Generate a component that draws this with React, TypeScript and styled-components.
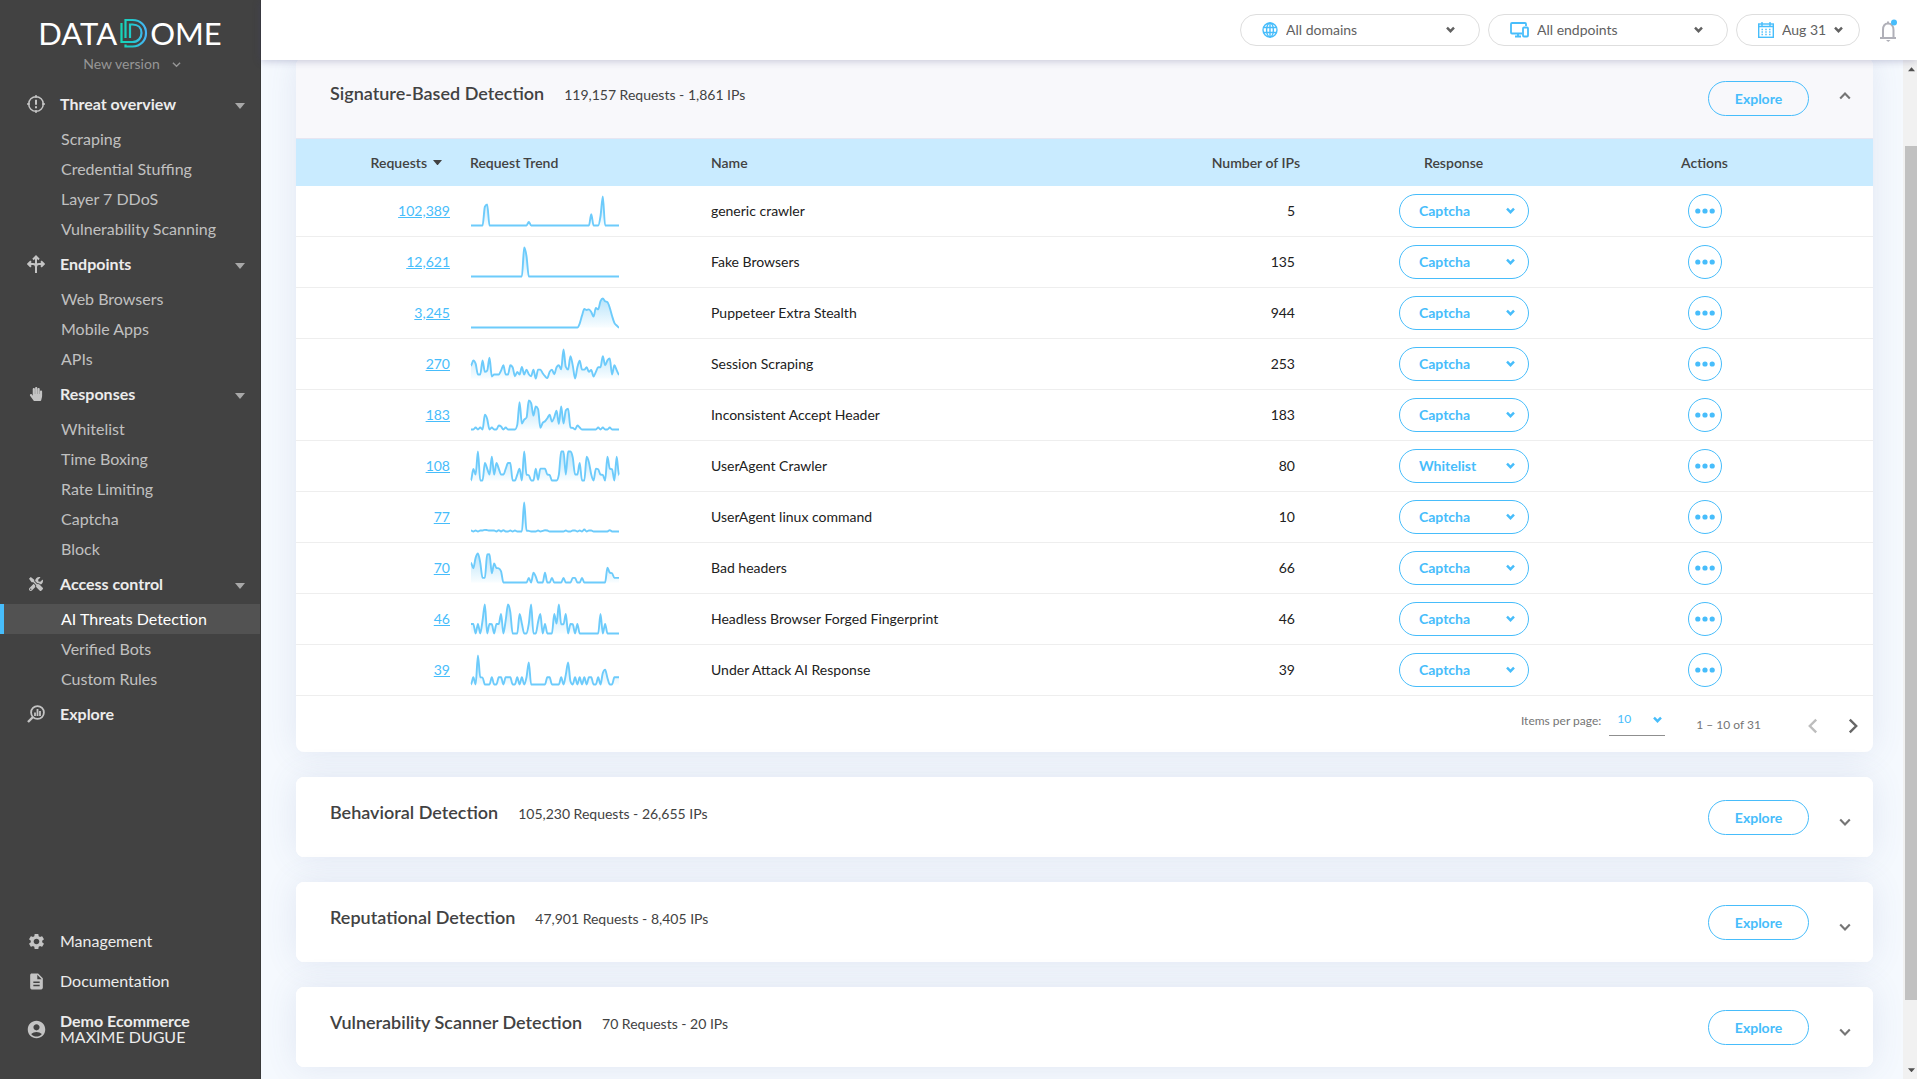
import React from "react";
import styled, { createGlobalStyle } from "styled-components";
import { FaHandPaper, FaTools } from "react-icons/fa";
import { MdAccountCircle, MdDescription, MdSettings } from "react-icons/md";

const GlobalStyle = createGlobalStyle`
  *, *::before, *::after { box-sizing: border-box; }
  body {
    margin: 0;
    font-family: Lato, "Open Sans", sans-serif;
    font-size: 14px;
    color: #424242;
    background: #f5f9fe;
  }
  button, select { font: inherit; color: inherit; }
  button { cursor: pointer; }
  a { color: inherit; text-decoration: none; }
  svg { display: block; flex: none; }
  ul { list-style: none; margin: 0; padding: 0; }
`;

const BLUE = "#47bdfb";

const Shell = styled.div`
  display: flex;
  height: 100vh;
  overflow: hidden;
`;

/* ---------- sidebar ---------- */

const Sidebar = styled.aside`
  flex: none;
  width: 261px;
  display: flex;
  flex-direction: column;
  padding-bottom: 22px;
  background: #424242;
  border-right: 1px solid #3a3a3a;
  color: #ececec;
`;

const Brand = styled.div`
  display: flex;
  flex-direction: column;
  align-items: center;
  height: 84px;
  padding-top: 16px;
`;

const Logo = styled.div`
  display: flex;
  align-items: center;
  gap: 2px;
  height: 34px;
  font-size: 31px;
  line-height: 34px;
  color: #fff;
`;

const VersionButton = styled.button`
  display: flex;
  align-items: center;
  gap: 12px;
  border: 0;
  padding: 0 0 0 4px;
  background: none;
  color: #969696;
  line-height: 28px;
`;

const Nav = styled.nav`
  flex: 1;
`;

const GroupHead = styled.a`
  display: grid;
  grid-template-columns: 60px 1fr 10px;
  align-items: center;
  height: 40px;
  padding: 0 15px 1px 0;
  font-size: 16px;
  font-weight: 700;
`;

const IconSlot = styled.span`
  display: flex;
  justify-content: center;
  padding-left: 12px;
  color: #c4c4c4;
`;

const CaretSlot = styled.span`
  padding-top: 4px;
  color: #a8a8a8;
`;

const NavLink = styled.a<{ $active?: boolean }>`
  display: block;
  height: 30px;
  padding-left: ${(p) => (p.$active ? 57 : 61)}px;
  border-left: ${(p) => (p.$active ? `4px solid ${BLUE}` : "0")};
  background: ${(p) => (p.$active ? "#525252" : "none")};
  color: ${(p) => (p.$active ? "#fff" : "#c0c0c0")};
  font-size: 16px;
  line-height: 30px;
`;

const FootLink = styled.a<{ $tall?: boolean }>`
  display: grid;
  grid-template-columns: 60px 1fr;
  align-items: center;
  height: ${(p) => (p.$tall ? 56 : 40)}px;
  font-size: 16px;
  line-height: 16px;

  strong { display: block; }
`;

/* ---------- top bar ---------- */

const Main = styled.div`
  flex: 1;
  min-width: 0;
  display: flex;
  flex-direction: column;
`;

const TopBar = styled.header`
  position: relative;
  z-index: 2;
  flex: none;
  display: flex;
  justify-content: flex-end;
  align-items: center;
  gap: 8px;
  height: 60px;
  padding-right: 20px;
  background: #fff;
  box-shadow: 0 1px 8px rgba(60, 60, 120, 0.28);
`;

const Pill = styled.label<{ $width: number; $end?: number }>`
  display: flex;
  align-items: center;
  gap: 8px;
  width: ${(p) => p.$width}px;
  height: 32px;
  padding: 0 ${(p) => p.$end ?? 24}px 0 21px;
  border: 1px solid #dedede;
  border-radius: 16px;
  color: #616161;
`;

const PlainSelect = styled.select`
  flex: 1;
  min-width: 0;
  appearance: none;
  border: 0;
  padding: 0 0 2px;
  outline: 0;
  background: none;
`;

const BellButton = styled.button`
  display: flex;
  margin-left: 12px;
  border: 0;
  padding: 0;
  background: none;
`;

/* ---------- content ---------- */

const Body = styled.div`
  flex: 1;
  min-height: 0;
  display: flex;
`;

const Content = styled.main`
  flex: 1;
  min-width: 0;
  display: flex;
  flex-direction: column;
  gap: 25px;
  margin-top: -2px;
  padding: 0 30px 0 35px;
`;

const Card = styled.section`
  flex: none;
  border-radius: 8px;
  background: #fff;
  box-shadow: 0 0 32px rgba(80, 100, 155, 0.12);
`;

const CardHead = styled.div<{ $open?: boolean }>`
  display: flex;
  align-items: flex-start;
  height: ${(p) => (p.$open ? 81 : 80)}px;
  padding: 23px 22px 0 34px;
  border-radius: ${(p) => (p.$open ? "8px 8px 0 0" : "8px")};
  border-bottom: ${(p) => (p.$open ? "1px solid #e6e6f2" : "0")};
  background: ${(p) => (p.$open ? "#f8f8fb" : "#fff")};
`;

const CardTitle = styled.h2`
  margin: 0 20px 0 0;
  font-size: 18px;
  font-weight: 600;
  line-height: 24px;
`;

const CardMeta = styled.span`
  flex: 1;
  line-height: 28px;
`;

const ExploreButton = styled.button`
  width: 101px;
  height: 35px;
  margin-right: 30px;
  border: 1px solid ${BLUE};
  border-radius: 18px;
  padding: 0;
  background: none;
  color: ${BLUE};
  font-weight: 700;
`;

const ToggleButton = styled.button<{ $open?: boolean }>`
  display: flex;
  border: 0;
  padding: ${(p) => (p.$open ? 9 : 16)}px 0 0;
  background: none;
  color: #757575;
`;

const Table = styled.table`
  width: 100%;
  table-layout: fixed;
  border-collapse: separate;
  border-spacing: 0;
`;

const Col = styled.col<{ $width: number }>`
  width: ${(p) => p.$width}px;
`;

const Th = styled.th<{ $align?: string; $pad?: string }>`
  height: 47px;
  padding: ${(p) => p.$pad ?? "0"};
  background: #c9ebff;
  font-weight: 600;
  text-align: ${(p) => p.$align ?? "left"};
`;

const SortButton = styled.button`
  display: inline-flex;
  align-items: center;
  gap: 6px;
  border: 0;
  padding: 0;
  background: none;
  font-weight: 600;
`;

const Td = styled.td<{ $align?: string; $pad?: string }>`
  height: 51px;
  padding: ${(p) => p.$pad ?? "0"};
  border-bottom: 1px solid #eeeeee;
  color: #212121;
  text-align: ${(p) => p.$align ?? "left"};
`;

const CountLink = styled.a`
  color: ${BLUE};
  text-decoration: underline;
`;

const ResponseBox = styled.label`
  display: flex;
  align-items: center;
  width: 130px;
  height: 34px;
  padding: 0 13px 0 19px;
  border: 1px solid ${BLUE};
  border-radius: 17px;
  color: ${BLUE};
  font-weight: 700;
`;

const MoreButton = styled.button`
  display: inline-flex;
  align-items: center;
  justify-content: center;
  width: 34px;
  height: 34px;
  border: 1px solid ${BLUE};
  border-radius: 50%;
  padding: 0;
  background: none;
  color: ${BLUE};
  vertical-align: middle;
`;

const Pager = styled.div`
  display: flex;
  align-items: center;
  justify-content: flex-end;
  height: 56px;
  color: #757575;
  font-size: 12px;
`;

const PageSize = styled.label`
  display: flex;
  align-items: center;
  gap: 8px;
  margin: 0 31px 8px 0;
`;

const PageSizeBox = styled.span`
  display: flex;
  align-items: center;
  width: 56px;
  height: 32px;
  padding: 0 3px 0 8px;
  border-bottom: 1px solid #8f8f8f;
  color: ${BLUE};
`;

const PageRange = styled.span`
  margin-right: 32px;
`;

const PageButton = styled.button`
  display: flex;
  align-items: center;
  justify-content: center;
  width: 40px;
  height: 40px;
  padding: 4px 0 0;
  border: 0;
  background: none;
  color: #666;

  &:disabled { color: #bdbdbd; }
`;

const ScrollTrack = styled.div`
  flex: none;
  width: 14px;
  display: flex;
  flex-direction: column;
  align-items: flex-end;
  padding: 7px 2px;
  background: #f1f1f1;
  color: #505050;
`;

const ScrollThumb = styled.div`
  flex: 1;
  width: 12px;
  margin: 74px -2px 68px 0;
  background: #c1c1c1;
`;

/* ---------- drawings ---------- */

const Chevron = ({ size = 10, dir = "down", stroke = 2 }: { size?: number; dir?: "down" | "up" | "left" | "right"; stroke?: number }) => {
  const turn = { down: 0, left: 90, up: 180, right: 270 }[dir];
  return (
    <svg width={size} height={size} viewBox="0 0 10 10" fill="none" stroke="currentColor" strokeWidth={stroke} aria-hidden="true">
      <path d="M1 3l4 4 4-4" transform={`rotate(${turn} 5 5)`} />
    </svg>
  );
};

const ArrowChevron = () => (
  <svg width="9" height="8" viewBox="0 0 9 8" fill="none" stroke="currentColor" strokeWidth="2.4" aria-hidden="true">
    <path d="M1 1.6l3.5 3.6L8 1.6" />
  </svg>
);

const Caret = ({ width = 10, up = false }: { width?: number; up?: boolean }) => (
  <svg width={width} height={width / 2 + 1} viewBox="0 0 10 6" fill="currentColor" aria-hidden="true">
    <path d={up ? "M0 6h10L5 0z" : "M0 0h10L5 6z"} />
  </svg>
);

const DomeMark = () => (
  <svg width="29" height="30" viewBox="0 0 28 30" fill="none" aria-hidden="true">
    <defs>
      <linearGradient id="dome" gradientUnits="userSpaceOnUse" x1="0" y1="0" x2="28" y2="0">
        <stop offset="0" stopColor="#14d8b4" />
        <stop offset="0.4" stopColor="#1fcac8" />
        <stop offset="1" stopColor="#4ab4fb" />
      </linearGradient>
    </defs>
    <g stroke="url(#dome)" strokeWidth="2.2">
      <path d="M6 20V2h7c8 0 13.500 5.500 13.500 13S21 28.500 13 28.500H6v-2" />
      <path d="M10.500 20V6.500H13c5.500 0 9 3.500 9 8.500s-3.500 9-9 9H2V5" />
    </g>
  </svg>
);

const TargetIcon = () => (
  <svg width="18" height="18" viewBox="0 0 18 18" fill="none" stroke="currentColor" strokeWidth="1.500" aria-hidden="true">
    <circle cx="9" cy="9" r="7.300" />
    <path d="M9 0v3M9 15v3M0 9h3M15 9h3" />
    <path d="M9 4.800v5M9 11.200v2" strokeWidth="2" />
  </svg>
);

const DirectionsIcon = () => (
  <svg width="18" height="18" viewBox="0 0 18 18" fill="none" stroke="currentColor" strokeWidth="2" aria-hidden="true">
    <path d="M9 18V2M6 4.500l3-3 3 3M9 12c0-2-1-3-3-3H1.500M9 12c0-2 1-3 3-3h4.500M4 6.200L1.200 9 4 11.800M14 6.200L16.800 9 14 11.800" />
  </svg>
);

const InsightIcon = () => (
  <svg width="18" height="18" viewBox="0 0 18 18" fill="none" stroke="currentColor" aria-hidden="true">
    <circle cx="10.500" cy="7.500" r="6.400" strokeWidth="1.800" />
    <path d="M6 12l-5 5" strokeWidth="2.400" />
    <path d="M8 11V7.500M10.500 11V4M13 11V6" strokeWidth="1.800" />
  </svg>
);

const GlobeIcon = () => (
  <svg width="16" height="16" viewBox="0 0 16 16" fill="none" stroke={BLUE} strokeWidth="1.400" aria-hidden="true">
    <circle cx="8" cy="8" r="7" />
    <ellipse cx="8" cy="8" rx="3.400" ry="7" />
    <path d="M8 1v14M1.500 5.500h13M1.500 10.500h13" />
  </svg>
);

const DevicesIcon = () => (
  <svg width="19" height="16" viewBox="0 0 19 16" fill="none" stroke={BLUE} strokeWidth="1.800" aria-hidden="true">
    <path d="M12 11.500H2a1 1 0 0 1-1-1V2a1 1 0 0 1 1-1h13a1 1 0 0 1 1 1v2M8 11.500V14M5 14.500h6" />
    <rect x="13" y="5.500" width="5" height="9" rx="1" />
  </svg>
);

const CalendarIcon = () => (
  <svg width="16" height="16" viewBox="0 0 16 16" fill="none" stroke={BLUE} strokeWidth="1.400" aria-hidden="true">
    <rect x="0.700" y="2" width="14.600" height="13.300" />
    <path d="M1 4.500h14M4 0v4M12 0v4" />
    <path d="M3.500 7.500h9M3.500 10h9M3.500 12.500h9" strokeDasharray="1.400 2.400" />
  </svg>
);

const BellIcon = () => (
  <svg width="17" height="23" viewBox="0 0 17 23" fill="none" aria-hidden="true">
    <path d="M0 19h16M3 18.500V11c0-4 2-6.500 5-6.500s5.500 2.500 5.500 6.500v7.500M8 2.500v2" stroke="#b0b0b8" strokeWidth="2" />
    <path d="M6 21h4.500L8.200 23z" fill="#b0b0b8" />
    <circle cx="14" cy="3.500" r="3" fill={BLUE} />
  </svg>
);

const Dots = () => (
  <svg width="20" height="6" viewBox="0 0 20 6" fill="currentColor" aria-hidden="true">
    <circle cx="2.800" cy="3" r="2.600" />
    <circle cx="10" cy="3" r="2.600" />
    <circle cx="17.200" cy="3" r="2.600" />
  </svg>
);

/* Monotone cubic through evenly spaced samples, as a filled sparkline. */
const SPARK_W = 148;
const SPARK_H = 30;
const Sparkline = ({ id, values }: { id: string; values: number[] }) => {
  const step = SPARK_W / (values.length - 1);
  const pts = values.map((v, i) => [1 + i * step, 0.5 + SPARK_H - (v / 88) * (SPARK_H - 1)]);
  const slope = (i: number) => {
    if (i <= 0 || i >= pts.length - 1) return 0;
    const a = (pts[i][1] - pts[i - 1][1]) / step;
    const b = (pts[i + 1][1] - pts[i][1]) / step;
    if (a * b <= 0) return 0;
    return Math.sign(a) * Math.min(Math.abs(a), Math.abs(b), Math.abs(a + b) / 4) * 2;
  };
  let d = `M${pts[0][0]} ${pts[0][1]}`;
  for (let i = 1; i < pts.length; i++) {
    const [x0, y0] = pts[i - 1];
    const [x1, y1] = pts[i];
    const t = step / 3;
    d += `C${x0 + t} ${y0 + slope(i - 1) * t} ${x1 - t} ${y1 - slope(i) * t} ${x1} ${y1}`;
  }
  return (
    <svg width={SPARK_W + 2} height={SPARK_H + 2} viewBox={`0 0 ${SPARK_W + 2} ${SPARK_H + 2}`} fill="none" role="img" aria-label="Request trend">
      <defs>
        <linearGradient id={id} gradientUnits="userSpaceOnUse" x1="0" y1="0" x2="0" y2={SPARK_H}>
          <stop offset="0" stopColor="#b4e2fa" />
          <stop offset="1" stopColor="#f8fdff" />
        </linearGradient>
      </defs>
      <path d={`${d}L${SPARK_W + 1} ${SPARK_H + 0.5}H1Z`} fill={`url(#${id})`} />
      <path d={d} stroke="#6dcbfb" strokeWidth="1.900" strokeLinejoin="round" />
    </svg>
  );
};

/* ---------- data ---------- */

const sparse = (points: Record<number, number>) => Array.from({ length: 65 }, (_, i) => points[i] ?? 0);

const rows = [
  { count: "102,389", name: "generic crawler", ips: 5, response: "Captcha",
    trend: sparse({ 6: 57, 7: 64, 25: 11, 52: 34, 56: 28, 57: 88 }) },
  { count: "12,621", name: "Fake Browsers", ips: 135, response: "Captcha",
    trend: sparse({ 23: 88, 24: 62 }) },
  { count: "3,245", name: "Puppeteer Extra Stealth", ips: 944, response: "Captcha",
    trend: sparse({ 47: 12, 48: 36, 49: 56, 50: 53, 51: 55, 52: 47, 53: 33, 54: 59, 55: 55, 56: 80, 57: 88, 58: 80, 59: 77, 60: 60, 61: 35, 62: 14, 63: 6 }) },
  { count: "270", name: "Session Scraping", ips: 253, response: "Captcha",
    trend: [39, 55, 45, 12, 12, 55, 20, 24, 63, 6, 12, 12, 12, 24, 40, 12, 12, 40, 34, 7, 20, 12, 35, 12, 27, 13, 7, 27, 0, 27, 27, 16, 7, 1, 20, 27, 13, 34, 40, 28, 88, 35, 27, 68, 40, 0, 34, 54, 27, 27, 34, 20, 26, 6, 20, 34, 34, 68, 40, 55, 61, 12, 40, 25, 12] },
  { count: "183", name: "Inconsistent Accept Header", ips: 183, response: "Captcha",
    trend: sparse({ 2: 6, 4: 6, 6: 45, 7: 32, 9: 6, 12: 12, 13: 9, 15: 6, 20: 14, 21: 83, 22: 18, 23: 30, 24: 36, 25: 88, 26: 80, 27: 42, 28: 70, 29: 62, 30: 5, 31: 20, 32: 25, 33: 34, 34: 45, 35: 24, 36: 37, 37: 57, 38: 17, 39: 70, 40: 18, 41: 58, 42: 63, 43: 6, 44: 5, 46: 12, 47: 6, 55: 6, 57: 6, 60: 6 }) },
  { count: "108", name: "UserAgent Crawler", ips: 80, response: "Whitelist",
    trend: [0, 35, 18, 88, 0, 0, 53, 36, 18, 72, 18, 53, 36, 18, 18, 35, 53, 53, 0, 0, 18, 36, 0, 88, 18, 16, 0, 0, 36, 2, 36, 36, 36, 18, 17, 0, 0, 0, 18, 88, 88, 18, 88, 88, 70, 18, 18, 53, 0, 0, 72, 55, 18, 0, 36, 34, 18, 17, 0, 72, 36, 34, 0, 72, 16] },
  { count: "77", name: "UserAgent linux command", ips: 10, response: "Captcha",
    trend: sparse({ 0: 3, 2: 3, 4: 3, 5: 3, 6: 5, 7: 4, 8: 3, 9: 3, 10: 3, 12: 4, 14: 4, 17: 3, 19: 3, 23: 88, 24: 3, 25: 2, 29: 3, 31: 2, 32: 4, 33: 3, 41: 3, 44: 3, 45: 3, 47: 3, 49: 6, 51: 3, 52: 3, 60: 4 }) },
  { count: "70", name: "Bad headers", ips: 66, response: "Captcha",
    trend: sparse({ 0: 60, 1: 43, 2: 75, 3: 88, 4: 60, 5: 14, 6: 14, 7: 85, 8: 86, 9: 28, 10: 58, 11: 44, 12: 43, 13: 34, 25: 14, 27: 30, 28: 18, 32: 30, 35: 14, 40: 14, 44: 14, 45: 14, 48: 14, 59: 45, 60: 30, 61: 28, 62: 14, 63: 14, 64: 14 }) },
  { count: "46", name: "Headless Browser Forged Fingerprint", ips: 46, response: "Captcha",
    trend: sparse({ 0: 29, 1: 29, 3: 29, 5: 40, 6: 88, 8: 29, 9: 28, 11: 29, 12: 29, 13: 59, 15: 40, 16: 88, 17: 65, 21: 59, 22: 30, 25: 30, 26: 88, 29: 35, 30: 59, 32: 29, 36: 59, 37: 30, 38: 88, 39: 28, 40: 28, 41: 59, 43: 29, 44: 28, 46: 29, 56: 59, 58: 29 }) },
  { count: "39", name: "Under Attack AI Response", ips: 39, response: "Captcha",
    trend: sparse({ 1: 22, 3: 88, 4: 22, 5: 21, 9: 22, 12: 22, 13: 22, 15: 22, 16: 22, 17: 22, 20: 22, 22: 22, 24: 22, 25: 67, 33: 22, 34: 22, 39: 22, 41: 30, 42: 67, 43: 10, 45: 22, 47: 22, 49: 22, 51: 22, 52: 22, 55: 22, 57: 35, 58: 45, 59: 20, 62: 22, 63: 22, 64: 22 }) },
];

const collapsed = [
  { title: "Behavioral Detection", meta: "105,230 Requests - 26,655 IPs" },
  { title: "Reputational Detection", meta: "47,901 Requests - 8,405 IPs" },
  { title: "Vulnerability Scanner Detection", meta: "70 Requests - 20 IPs" },
];

const groups = [
  { title: "Threat overview", icon: <TargetIcon />, items: ["Scraping", "Credential Stuffing", "Layer 7 DDoS", "Vulnerability Scanning"] },
  { title: "Endpoints", icon: <DirectionsIcon />, items: ["Web Browsers", "Mobile Apps", "APIs"] },
  { title: "Responses", icon: <FaHandPaper size={14} />, items: ["Whitelist", "Time Boxing", "Rate Limiting", "Captcha", "Block"] },
  { title: "Access control", icon: <FaTools size={14} />, items: ["AI Threats Detection", "Verified Bots", "Custom Rules"] },
  { title: "Explore", icon: <InsightIcon />, items: [] as string[] },
];

const ACTIVE = "AI Threats Detection";

/* ---------- sections ---------- */

const SideNav = () => (
  <Sidebar>
    <Brand>
      <Logo aria-label="DataDome">
        <span>DATA</span>
        <DomeMark />
        <span>OME</span>
      </Logo>
      <VersionButton type="button">
        New version <Chevron size={9} stroke={1.5} />
      </VersionButton>
    </Brand>
    <Nav>
      {groups.map((g) => (
        <div key={g.title}>
          <GroupHead href="#">
            <IconSlot>{g.icon}</IconSlot>
            <span>{g.title}</span>
            {g.items.length > 0 && <CaretSlot><Caret /></CaretSlot>}
          </GroupHead>
          <ul>
            {g.items.map((item) => (
              <li key={item}>
                <NavLink href="#" $active={item === ACTIVE}>{item}</NavLink>
              </li>
            ))}
          </ul>
        </div>
      ))}
    </Nav>
    <FootLink href="#"><IconSlot><MdSettings size={19} /></IconSlot>Management</FootLink>
    <FootLink href="#"><IconSlot><MdDescription size={19} /></IconSlot>Documentation</FootLink>
    <FootLink href="#" $tall>
      <IconSlot><MdAccountCircle size={21} /></IconSlot>
      <span><strong>Demo Ecommerce</strong>MAXIME DUGUE</span>
    </FootLink>
  </Sidebar>
);

const Filters = () => (
  <TopBar>
    <Pill $width={240}>
      <GlobeIcon />
      <PlainSelect aria-label="Domains"><option>All domains</option></PlainSelect>
      <ArrowChevron />
    </Pill>
    <Pill $width={240}>
      <DevicesIcon />
      <PlainSelect aria-label="Endpoints"><option>All endpoints</option></PlainSelect>
      <ArrowChevron />
    </Pill>
    <Pill $width={124} $end={16}>
      <CalendarIcon />
      <PlainSelect aria-label="Date"><option>Aug 31</option></PlainSelect>
      <ArrowChevron />
    </Pill>
    <BellButton type="button" aria-label="Notifications"><BellIcon /></BellButton>
  </TopBar>
);

const DetectionHead = ({ title, meta, open }: { title: string; meta: string; open?: boolean }) => (
  <CardHead $open={open}>
    <CardTitle>{title}</CardTitle>
    <CardMeta>{meta}</CardMeta>
    <ExploreButton type="button">Explore</ExploreButton>
    <ToggleButton type="button" $open={open} aria-expanded={!!open} aria-label={`Toggle ${title}`}>
      <Chevron size={12} dir={open ? "up" : "down"} stroke={1.8} />
    </ToggleButton>
  </CardHead>
);

const SignatureTable = () => (
  <Table>
    <colgroup>
      <Col $width={174} />
      <Col $width={241} />
      <col />
      <Col $width={140} />
      <Col $width={298} />
      <Col $width={275} />
    </colgroup>
    <thead>
      <tr>
        <Th $align="right" $pad="0 28px 0 0"><SortButton type="button">Requests <Caret width={9} /></SortButton></Th>
        <Th>Request Trend</Th>
        <Th>Name</Th>
        <Th $align="right">Number of IPs</Th>
        <Th $pad="0 0 0 124px">Response</Th>
        <Th $align="center" $pad="0 62px 0 0">Actions</Th>
      </tr>
    </thead>
    <tbody>
      {rows.map((r, i) => (
        <tr key={r.name}>
          <Td $align="right" $pad="0 20px 2px 0"><CountLink href="#">{r.count}</CountLink></Td>
          <Td><Sparkline id={`trend-${i}`} values={r.trend} /></Td>
          <Td $pad="0 0 2px">{r.name}</Td>
          <Td $align="right" $pad="0 5px 2px 0">{r.ips}</Td>
          <Td $pad="0 0 0 99px">
            <ResponseBox>
              <PlainSelect aria-label={`Response for ${r.name}`}><option>{r.response}</option></PlainSelect>
              <ArrowChevron />
            </ResponseBox>
          </Td>
          <Td $align="center" $pad="0 62px 0 0">
            <MoreButton type="button" aria-label={`Actions for ${r.name}`}><Dots /></MoreButton>
          </Td>
        </tr>
      ))}
    </tbody>
  </Table>
);

const Pagination = () => (
  <Pager>
    <PageSize>
      Items per page:
      <PageSizeBox>
        <PlainSelect><option>10</option></PlainSelect>
        <ArrowChevron />
      </PageSizeBox>
    </PageSize>
    <PageRange>1 – 10 of 31</PageRange>
    <PageButton type="button" disabled aria-label="Previous page"><Chevron size={16} dir="left" stroke={1.5} /></PageButton>
    <PageButton type="button" aria-label="Next page"><Chevron size={16} dir="right" stroke={1.5} /></PageButton>
  </Pager>
);

export default function App() {
  return (
    <>
      <GlobalStyle />
      <Shell>
        <SideNav />
        <Main>
          <Filters />
          <Body>
            <Content>
              <Card>
                <DetectionHead open title="Signature-Based Detection" meta="119,157 Requests - 1,861 IPs" />
                <SignatureTable />
                <Pagination />
              </Card>
              {collapsed.map((c) => (
                <Card key={c.title}>
                  <DetectionHead title={c.title} meta={c.meta} />
                </Card>
              ))}
            </Content>
            <ScrollTrack aria-hidden="true">
              <Caret width={7} up />
              <ScrollThumb />
              <Caret width={7} />
            </ScrollTrack>
          </Body>
        </Main>
      </Shell>
    </>
  );
}
